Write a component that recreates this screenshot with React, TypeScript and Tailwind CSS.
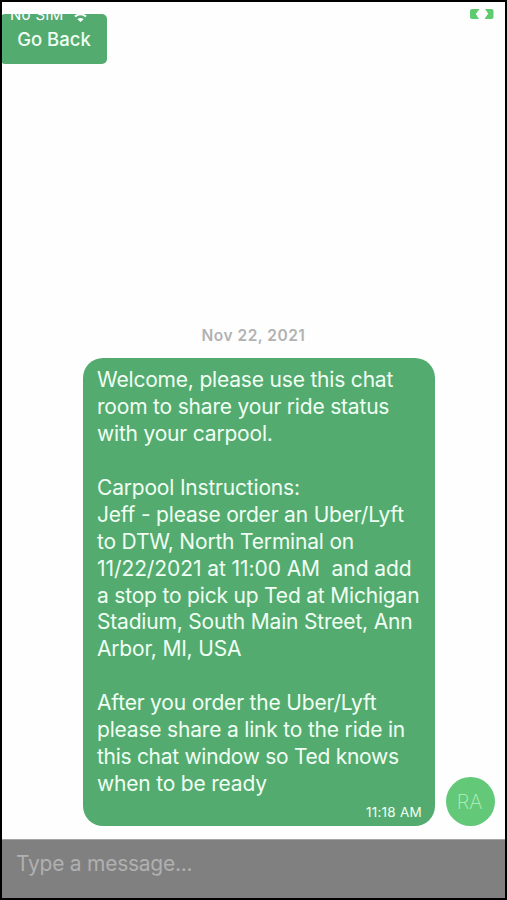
const lines = [
  "Welcome, please use this chat",
  "room to share your ride status",
  "with your carpool.",
  "",
  "Carpool Instructions:",
  "Jeff - please order an Uber/Lyft",
  "to DTW, North Terminal on",
  "11/22/2021 at 11:00 AM  and add",
  "a stop to pick up Ted at Michigan",
  "Stadium, South Main Street, Ann",
  "Arbor, MI, USA",
  "",
  "After you order the Uber/Lyft",
  "please share a link to the ride in",
  "this chat window so Ted knows",
  "when to be ready",
];

function tracking(line: string) {
  if (/^\d/.test(line)) return "tracking-[-0.08px]";
  if (line.startsWith("this chat")) return "tracking-[-0.29px]";
  return "tracking-[-0.19px]";
}

function WifiIcon() {
  return (
    <svg width="17" height="13" viewBox="0 0 17 13" fill="none" stroke="white" strokeWidth="2.2">
      <path d="M1 4.2a10.6 10.6 0 0 1 15 0" />
      <path d="M3 7.600a7.600 7.600 0 0 1 11 0" />
      <path d="M8.500 13 5.400 10.300a4.200 4.200 0 0 1 6.200 0Z" fill="white" stroke="none" />
    </svg>
  );
}

function BatteryIcon() {
  return (
    <svg width="25" height="10" viewBox="0 0 25 10" fill="#5fcb70">
      <path d="M2 0h7.5L5.800 5l3.200 5H2a2 2 0 0 1-2-2V2a2 2 0 0 1 2-2Z" />
      <path d="M15 0h6.500a2 2 0 0 1 2 2v6a2 2 0 0 1-2 2H14.500l3.700-5.500Z" />
    </svg>
  );
}

function Header() {
  return (
    <header className="relative flex h-[62px] items-start justify-between pt-3">
      <button className="-ml-0.5 h-[50px] w-[107px] rounded-[5px] bg-[#54ab6f] pl-px pt-[2px] text-[18.5px] font-medium text-[#f0fff3]">
        Go Back
      </button>
      {/* status bar sits on top of the button */}
      <div className="absolute left-2 top-[5px] flex items-center gap-2 text-[15px] leading-4 tracking-[0.3px] text-white">
        <span>No SIM</span>
        <WifiIcon />
      </div>
      <div className="-mt-[5px] mr-[10px]">
        <BatteryIcon />
      </div>
    </header>
  );
}

function Message() {
  return (
    <div className="flex items-end gap-[11px] pl-[81px]">
      <div className="h-[468px] w-[352px] shrink-0 rounded-[20px] bg-[#54ab6f] pl-3.5 pr-[13px] pt-[9px] text-[#f0fff3]">
        <p className="text-[21px] leading-[26.95px]">
          {lines.map((line, i) => (
            <span key={i} className={`block h-[26.95px] whitespace-pre ${tracking(line)}`}>
              {line}
            </span>
          ))}
        </p>
        <p className="mt-[6px] text-right text-[13.5px] leading-4 tracking-[0.25px]">11:18 AM</p>
      </div>
      <div className="flex size-[49px] shrink-0 items-center justify-center rounded-full bg-[#63c979] pr-0.5 text-[20px] font-extralight text-[#b4efbf]">
        RA
      </div>
    </div>
  );
}

export default function App() {
  return (
    <main className="flex h-[900px] w-[507px] flex-col overflow-hidden border-2 border-black bg-[#fefefe] font-['Inter',sans-serif]">
      <Header />
      <div className="flex flex-1 flex-col justify-end pb-[13px]">
        <p className="mb-[12px] text-center text-[15.5px] font-semibold leading-5 tracking-[0.5px] text-[#b2b2b2]">
          Nov 22, 2021
        </p>
        <Message />
      </div>
      <footer className="h-[59px] border-t border-[#a5a5a5] bg-[#808080] px-3.5 pt-[9px]">
        <input
          placeholder="Type a message..."
          className="block h-[30px] w-full text-[21px] tracking-[-0.25px] text-white outline-none placeholder:text-[#b0b0b0]"
        />
      </footer>
    </main>
  );
}
